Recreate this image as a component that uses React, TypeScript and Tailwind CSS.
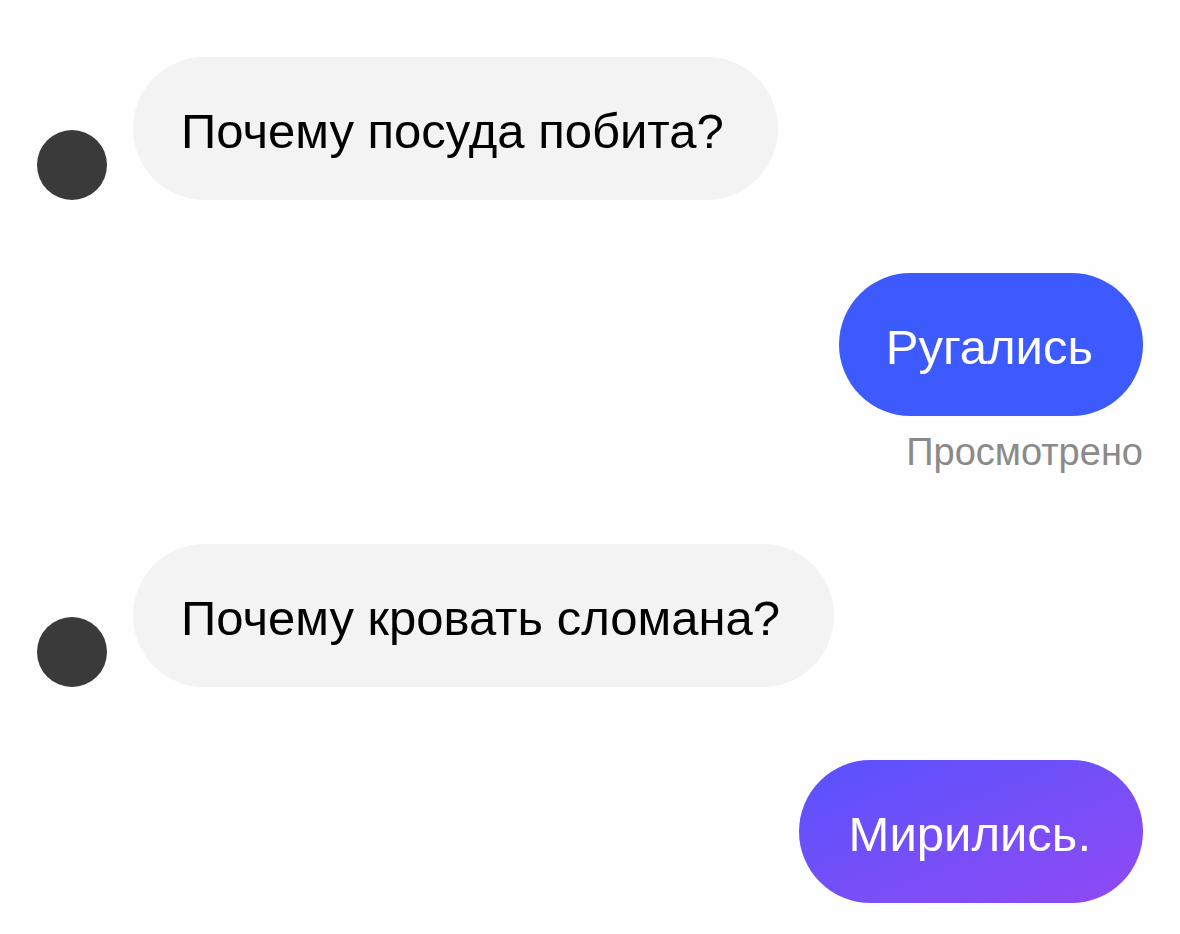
import React from "react";

const font = { fontFamily: '"Liberation Sans", Arial, sans-serif' };

function Incoming({ text }: { text: string }) {
  return (
    <div className="flex items-end gap-[26px]">
      <div className="w-[70px] h-[70px] rounded-full bg-[#3a3a3a] shrink-0" />
      <div className="h-[143px] rounded-full bg-[#f3f3f3] flex items-center pl-[48px] pr-[54px] text-[49px] leading-none text-black pt-[5px]">
        {text}
      </div>
    </div>
  );
}

export default function App() {
  return (
    <div className="w-[1180px] h-[934px] bg-[#fefefe] overflow-hidden" style={font}>
      <div className="flex flex-col pl-[37px] pr-[37px] pt-[57px]">
        <Incoming text="Почему посуда побита?" />
        <div className="flex flex-col items-end mt-[73px]">
          <div className="h-[143px] rounded-full bg-[#3d5afe] flex items-center pl-[47px] pr-[50px] text-[49px] leading-none text-white pt-[5px]">
            Ругались
          </div>
          <div className="mt-[14px] text-[38px] text-[#8a8a8a] leading-[44px]">Просмотрено</div>
        </div>
        <div className="mt-[70px]">
          <Incoming text="Почему кровать сломана?" />
        </div>
        <div className="flex justify-end mt-[73px]">
          <div className="h-[143px] rounded-full bg-gradient-to-br from-[#5752fe] to-[#8f49f4] flex items-center pl-[50px] pr-[52px] text-[49px] leading-none text-white pt-[5px]">
            Мирились.
          </div>
        </div>
      </div>
    </div>
  );
}
